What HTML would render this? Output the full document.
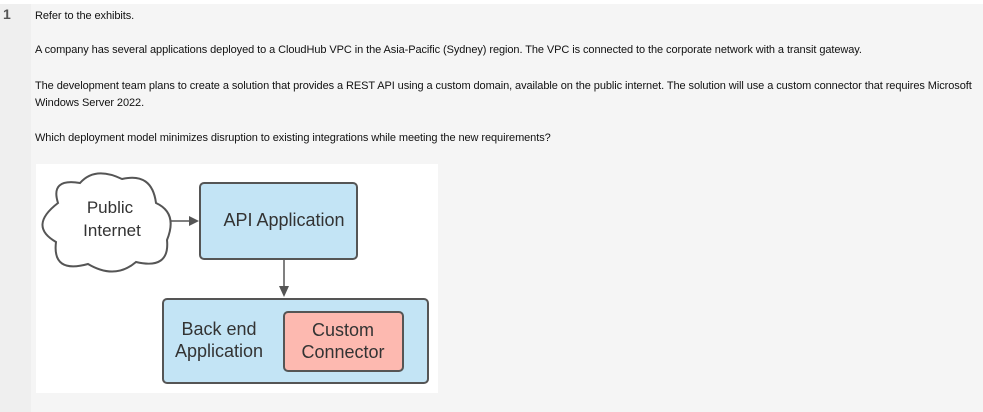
<!DOCTYPE html>
<html><head><meta charset="utf-8"><style>
html,body{margin:0;padding:0;width:983px;height:412px;overflow:hidden;background:#fff;font-family:"Liberation Sans",Arial,sans-serif;}
.left{position:absolute;left:0;top:4px;width:31px;height:408px;background:#efefef;}
.main{position:absolute;left:31px;top:4px;width:952px;height:408px;background:#f5f5f5;}
.num{position:absolute;left:3px;top:6px;font-size:14px;font-weight:bold;color:#555;}
.t{position:absolute;left:35px;font-size:11px;color:#111;line-height:17px;white-space:nowrap;letter-spacing:-0.08px;}
svg{position:absolute;left:0;top:0;}
</style></head><body>
<div class="left"></div><div class="main"></div>
<div class="num">1</div>
<div class="t" style="top:8px">Refer to the exhibits.</div>
<div class="t" style="top:42px">A company has several applications deployed to a CloudHub VPC in the Asia-Pacific (Sydney) region. The VPC is connected to the corporate network with a transit gateway.</div>
<div class="t" style="top:78px">The development team plans to create a solution that provides a REST API using a custom domain, available on the public internet. The solution will use a custom connector that requires Microsoft<br>Windows Server 2022.</div>
<div class="t" style="top:130px">Which deployment model minimizes disruption to existing integrations while meeting the new requirements?</div>
<svg width="983" height="412" font-family="Liberation Sans, Arial, sans-serif">
<rect x="36" y="164" width="402" height="229" fill="#fff"/>
<path d="M58,203 Q50,178 80,183 Q95,166 122,179 Q152,172 156,203 Q178,213 167,240 Q170,270 136,262 Q115,280 88,264 Q52,274 56,242 Q28,226 58,203 Z" fill="#fff" stroke="#555" stroke-width="2"/>
<text x="110" y="213" font-size="17" fill="#333" text-anchor="middle">Public</text>
<text x="112" y="236" font-size="17" fill="#333" text-anchor="middle">Internet</text>
<line x1="170" y1="221" x2="191" y2="221" stroke="#555" stroke-width="1.5"/>
<path d="M189,216 L199,221 L189,226 Z" fill="#555"/>
<rect x="200" y="183" width="157" height="76" rx="4" fill="#c3e4f5" stroke="#555" stroke-width="2"/>
<text x="284" y="226" font-size="18" fill="#333" text-anchor="middle">API Application</text>
<line x1="284" y1="260" x2="284" y2="288" stroke="#555" stroke-width="1.5"/>
<path d="M279,286 L284,297 L289,286 Z" fill="#555"/>
<rect x="163" y="299" width="265" height="84" rx="4" fill="#c3e4f5" stroke="#555" stroke-width="2"/>
<text x="219" y="335" font-size="18" fill="#333" text-anchor="middle">Back end</text>
<text x="219" y="357" font-size="18" fill="#333" text-anchor="middle">Application</text>
<rect x="284" y="312" width="119" height="59" rx="4" fill="#fdb9b0" stroke="#555" stroke-width="2"/>
<text x="343" y="336" font-size="18" fill="#333" text-anchor="middle">Custom</text>
<text x="343" y="358" font-size="18" fill="#333" text-anchor="middle">Connector</text>
</svg>
</body></html>
